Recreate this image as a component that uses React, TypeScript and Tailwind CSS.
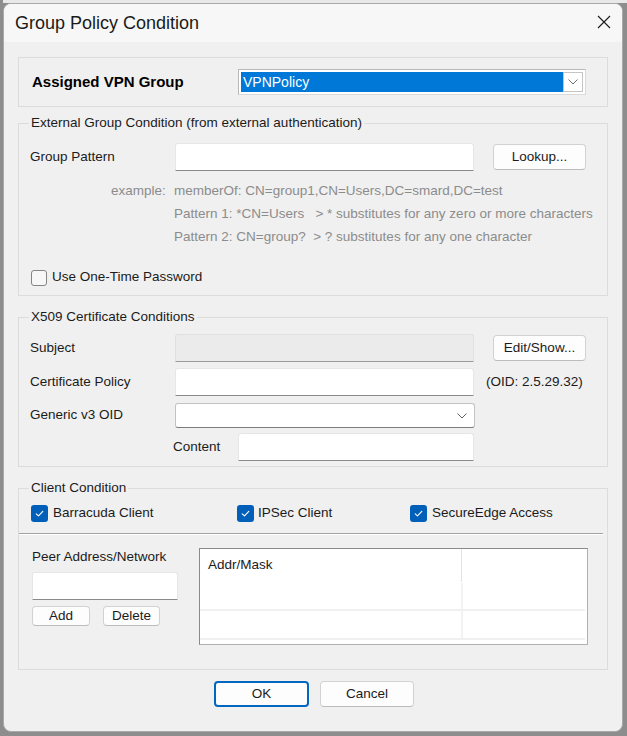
import React from 'react';

function Check({ checked }: { checked: boolean }) {
  if (checked) {
    return (
      <div className="w-[17px] h-[17px] rounded-[3px] bg-[#005fb8] flex items-center justify-center shrink-0">
        <svg viewBox="0 0 12 12" className="w-[11px] h-[11px]">
          <path d="M2.4 6.3 L4.9 8.7 L9.6 3.6" stroke="white" strokeWidth="1.2" fill="none" strokeLinecap="round" strokeLinejoin="round" />
        </svg>
      </div>
    );
  }
  return <div className="w-[16px] h-[16px] rounded-[3px] border border-[#858585] bg-[#f7f7f7] shrink-0" />;
}

function TextBox({ className = '' }: { className?: string }) {
  return <div className={`h-[28px] bg-white border border-[#e6e6e6] border-b-[#8a8a8a] rounded-t-[3px] ${className}`} />;
}

function Btn({ children, primary = false, className = '' }: { children: React.ReactNode; primary?: boolean; className?: string }) {
  const edge = primary ? 'border-2 border-[#0067c0]' : 'border border-[#d2d2d2] border-b-[#bcbcbc]';
  return (
    <div className={`flex items-center justify-center rounded-[4px] bg-[#fdfdfd] text-[13.5px] text-[#1b1b1b] ${edge} ${className}`}>
      {children}
    </div>
  );
}

function Group({ title, className = '', children }: { title: string; className?: string; children: React.ReactNode }) {
  return (
    <div className={`relative border border-[#dcdcdc] ${className}`}>
      <span className="absolute -top-[9px] left-[10px] px-[2px] bg-[#f0f0f0] leading-[16px] text-[13.5px] text-[#1b1b1b]">{title}</span>
      {children}
    </div>
  );
}

export default function App() {
  return (
    <div className="w-[627px] h-[736px] bg-[#8d8d8d] flex flex-col overflow-hidden font-['Liberation_Sans',Arial,sans-serif] text-[13.5px] text-[#1b1b1b]">
      <div className="h-[3px] ml-[3px] bg-[#e8e8e8] shrink-0" />
      <div className="ml-[3px] w-[620px] h-[729px] rounded-[8px] border border-[#a9a9a9] bg-[#f0f0f0] overflow-hidden flex flex-col shrink-0">
        {/* title bar */}
        <div className="h-[38px] bg-[#f7f7f7] flex items-center justify-between pl-[11px] pr-[11px] shrink-0">
          <span className="text-[18px] text-[#1a1a1a]">Group Policy Condition</span>
          <svg viewBox="0 0 14 14" className="w-[14px] h-[14px] mt-[-2px]">
            <path d="M1 1 L13 13 M13 1 L1 13" stroke="#1a1a1a" strokeWidth="1.1" />
          </svg>
        </div>

        <div className="px-[14px] flex flex-col">
          {/* assigned group */}
          <div className="mt-[15px] h-[50px] border border-[#dcdcdc] flex items-center pl-[13px]">
            <span className="w-[206px] text-[15px] font-bold text-black">Assigned VPN Group</span>
            <div className="w-[348px] h-[26px] border border-[#b8b8b8] border-r-[#dadada] border-b-[#dadada] bg-white p-[2px] flex">
              <div className="flex-1 bg-[#0078d7] text-white text-[14px] leading-[20px] pl-[2px]">VPNPolicy</div>
              <div className="w-[20px] border border-[#c4c4c4] bg-white flex items-center justify-center">
                <svg viewBox="0 0 10 6" className="w-[10px] h-[6px]">
                  <path d="M0.5 0.5 L5 5 L9.5 0.5" stroke="#707070" strokeWidth="1" fill="none" />
                </svg>
              </div>
            </div>
          </div>

          {/* external group condition */}
          <Group title="External Group Condition (from external authentication)" className="mt-[16px] h-[173px]">
            <div className="pt-[19px] pl-[11px] flex items-center h-[47px]">
              <span className="w-[145px]">Group Pattern</span>
              <TextBox className="w-[299px]" />
              <Btn className="ml-[19px] w-[93px] h-[26px]">Lookup...</Btn>
            </div>
            <div className="mt-[8px] pl-[92px] grid grid-cols-[63px_1fr] leading-[23px] text-[13.5px] text-[#8c8c8c]">
              <span>example:</span>
              <span>memberOf: CN=group1,CN=Users,DC=smard,DC=test</span>
              <span />
              <span className="whitespace-pre">Pattern 1: *CN=Users   &gt; * substitutes for any zero or more characters</span>
              <span />
              <span className="whitespace-pre">Pattern 2: CN=group?  &gt; ? substitutes for any one character</span>
            </div>
            <div className="mt-[21px] pl-[12px] flex items-center gap-[5px] h-[17px]">
              <Check checked={false} />
              <span>Use One-Time Password</span>
            </div>
          </Group>

          {/* x509 */}
          <Group title="X509 Certificate Conditions" className="mt-[21px] h-[150px]">
            <div className="pt-[16px] pl-[11px] flex flex-col">
              <div className="flex items-center h-[28px]">
                <span className="w-[145px]">Subject</span>
                <div className="w-[299px] h-[28px] bg-[#ebebeb] border border-[#e0e0e0] border-b-[#9a9a9a] rounded-t-[3px]" />
                <Btn className="ml-[19px] w-[93px] h-[26px]">Edit/Show...</Btn>
              </div>
              <div className="mt-[6px] flex items-center h-[28px]">
                <span className="w-[145px]">Certificate Policy</span>
                <TextBox className="w-[299px]" />
                <span className="ml-[12px]">(OID: 2.5.29.32)</span>
              </div>
              <div className="mt-[7px] flex items-center h-[25px]">
                <span className="w-[145px]">Generic v3 OID</span>
                <div className="w-[300px] h-[25px] bg-white border border-[#c2c2c2] border-b-[#7c7c7c] rounded-[3px] flex items-center justify-end pr-[7px]">
                  <svg viewBox="0 0 10 6" className="w-[10px] h-[6px]">
                    <path d="M0.5 0.5 L5 5 L9.5 0.5" stroke="#606060" strokeWidth="1" fill="none" />
                  </svg>
                </div>
              </div>
              <div className="mt-[5px] flex items-center h-[28px] pl-[143px]">
                <span className="w-[65px]">Content</span>
                <TextBox className="w-[236px]" />
              </div>
            </div>
          </Group>

          {/* client condition */}
          <Group title="Client Condition" className="mt-[21px] h-[182px]">
            <div className="pt-[16px] pl-[12px] flex items-center h-[33px]">
              <div className="w-[206px] flex items-center gap-[5px]">
                <Check checked />
                <span>Barracuda Client</span>
              </div>
              <div className="w-[173px] flex items-center gap-[4px]">
                <Check checked />
                <span>IPSec Client</span>
              </div>
              <div className="flex items-center gap-[5px]">
                <Check checked />
                <span>SecureEdge Access</span>
              </div>
            </div>
            <div className="mt-[11px] mr-[4px] h-[2px] border-t border-[#a3a3a3] border-b border-b-white" />
            <div className="mt-[13px] flex pl-[13px]">
              <div className="w-[146px] flex flex-col">
                <span className="mt-[1px] leading-[16px]">Peer Address/Network</span>
                <TextBox className="mt-[7px] w-[146px] h-[27px]" />
                <div className="mt-[6px] flex gap-[13px]">
                  <Btn className="w-[58px] h-[20px]">Add</Btn>
                  <Btn className="w-[57px] h-[20px]">Delete</Btn>
                </div>
              </div>
              <div className="ml-[21px] w-[389px] h-[97px] border border-[#8a8a8a] border-r-[#b0b0b0] border-b-[#b0b0b0] bg-white flex flex-col">
                <div className="h-[34px] flex">
                  <div className="w-[262px] border-r border-[#e3e3e3] mb-[1px] flex items-center pl-[8px]">Addr/Mask</div>
                  <div className="flex-1" />
                </div>
                <div className="h-[28px] flex border-b-2 border-[#f0f0f0] mr-[2px]">
                  <div className="w-[263px] border-r-2 border-[#f2f2f2]" />
                </div>
                <div className="h-[29px] flex border-b-2 border-[#f0f0f0] mr-[2px]">
                  <div className="w-[263px] border-r-2 border-[#f2f2f2]" />
                </div>
              </div>
            </div>
          </Group>

          {/* ok / cancel */}
          <div className="mt-[11px] flex justify-center gap-[11px] pl-[2px]">
            <Btn primary className="w-[95px] h-[26px]">OK</Btn>
            <Btn className="w-[94px] h-[26px]">Cancel</Btn>
          </div>
        </div>
      </div>
    </div>
  );
}
